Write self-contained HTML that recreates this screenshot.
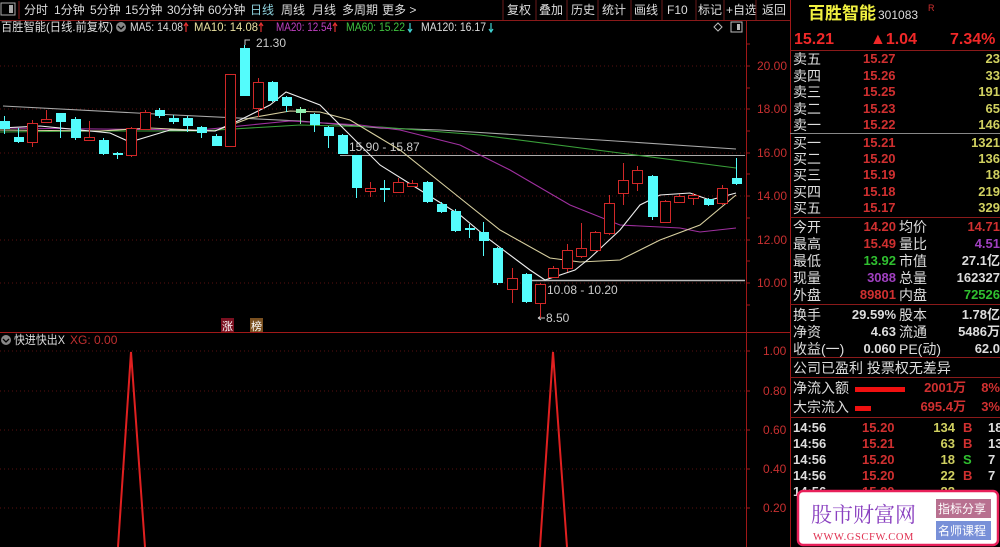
<!DOCTYPE html>
<html><head><meta charset="utf-8"><style>
*{margin:0;padding:0}
body{width:1000px;height:547px;background:#000;overflow:hidden;position:relative;font-family:"Liberation Sans","Noto Sans CJK SC",sans-serif;font-size:12px;color:#ccc}
</style></head><body>
<svg id="s" width="1000" height="547" style="position:absolute;left:0;top:0" xmlns="http://www.w3.org/2000/svg" font-family="Liberation Sans, Noto Sans CJK SC, sans-serif" font-size="12">
<rect x="1" y="3" width="14" height="12" fill="none" stroke="#aaa" stroke-width="1"/><rect x="9" y="5" width="4" height="8" fill="#aaa"/>
<line x1="19" y1="1" x2="19" y2="19" stroke="#8a1a1a"/>
<g fill="#ddd" font-size="12">
<text x="24" y="14">分时</text><text x="54" y="14">1分钟</text><text x="90" y="14">5分钟</text><text x="125" y="14">15分钟</text><text x="167" y="14">30分钟</text><text x="208" y="14">60分钟</text>
<text x="250" y="14" fill="#8fd4e0">日线</text><text x="281" y="14">周线</text><text x="312" y="14">月线</text><text x="342" y="14">多周期</text><text x="382" y="14">更多 &gt;</text>
<text x="507" y="14">复权</text><text x="539" y="14">叠加</text><text x="571" y="14">历史</text><text x="602" y="14">统计</text><text x="634" y="14">画线</text><text x="667" y="14">F10</text><text x="698" y="14">标记</text><text x="726" y="14">+自选</text><text x="762" y="14">返回</text>
</g>
<g stroke="#6a1a1a"><line x1="503" y1="0" x2="503" y2="20"/><line x1="536" y1="0" x2="536" y2="20"/><line x1="567" y1="0" x2="567" y2="20"/><line x1="598" y1="0" x2="598" y2="20"/><line x1="631" y1="0" x2="631" y2="20"/><line x1="662" y1="0" x2="662" y2="20"/><line x1="696" y1="0" x2="696" y2="20"/><line x1="724" y1="0" x2="724" y2="20"/><line x1="756" y1="0" x2="756" y2="20"/></g>
<line x1="0" y1="20.5" x2="790" y2="20.5" stroke="#8a1a1a"/>
<text x="1" y="31" fill="#ddd" textLength="112" lengthAdjust="spacingAndGlyphs">百胜智能(日线.前复权)</text>
<circle cx="121" cy="27" r="5" fill="#888"/><path d="M118 26l3 3 3-3" stroke="#000" fill="none" stroke-width="1.3"/>
<text x="130" y="31" fill="#ddd" textLength="53" lengthAdjust="spacingAndGlyphs">MA5: 14.08</text>
<text x="194" y="31" fill="#e8e0a0" textLength="64" lengthAdjust="spacingAndGlyphs">MA10: 14.08</text>
<text x="276" y="31" fill="#c040c0" textLength="56" lengthAdjust="spacingAndGlyphs">MA20: 12.54</text>
<text x="346" y="31" fill="#40c040" textLength="59" lengthAdjust="spacingAndGlyphs">MA60: 15.22</text>
<text x="421" y="31" fill="#ddd" textLength="65" lengthAdjust="spacingAndGlyphs">MA120: 16.17</text>
<g stroke-width="1.2"><path d="M186 32v-9m-2 3l2-3 2 3" stroke="#e03030" fill="none"/><path d="M261 32v-9m-2 3l2-3 2 3" stroke="#e03030" fill="none"/><path d="M335 32v-9m-2 3l2-3 2 3" stroke="#e03030" fill="none"/><path d="M410 23v9m-2-3l2 3 2-3" stroke="#40d0d0" fill="none"/><path d="M491 23v9m-2-3l2 3 2-3" stroke="#40d0d0" fill="none"/></g>
<path d="M714 27l4-4 4 4-4 4z" stroke="#bbb" fill="none"/><rect x="731" y="22" width="11" height="10" fill="none" stroke="#bbb"/><rect x="737" y="24" width="3" height="6" fill="#bbb"/>
<line x1="746.5" y1="21" x2="746.5" y2="547" stroke="#a01818"/>
<line x1="790.5" y1="0" x2="790.5" y2="547" stroke="#a01818"/>
<line x1="0" y1="332.5" x2="790" y2="332.5" stroke="#a01818"/>
<g stroke="#5a1010" stroke-dasharray="1,3">
<line x1="0" y1="66" x2="746" y2="66"/><line x1="0" y1="109" x2="746" y2="109"/><line x1="0" y1="153" x2="746" y2="153"/><line x1="0" y1="196" x2="746" y2="196"/><line x1="0" y1="240" x2="746" y2="240"/><line x1="0" y1="283" x2="746" y2="283"/>
<line x1="0" y1="351" x2="746" y2="351"/><line x1="0" y1="391" x2="746" y2="391"/><line x1="0" y1="430" x2="746" y2="430"/><line x1="0" y1="469" x2="746" y2="469"/><line x1="0" y1="508" x2="746" y2="508"/>
</g>
<g fill="#c83030" font-size="12">
<text x="757" y="70">20.00</text><text x="757" y="113">18.00</text><text x="757" y="157">16.00</text><text x="757" y="200">14.00</text><text x="757" y="244">12.00</text><text x="757" y="287">10.00</text>
<text x="763" y="355">1.00</text><text x="763" y="395">0.80</text><text x="763" y="434">0.60</text><text x="763" y="473">0.40</text><text x="763" y="512">0.20</text>
</g>
<g stroke="#a01818"><path d="M746 44h4M746 66h4M746 88h4M746 109h4M746 131h4M746 153h4M746 174h4M746 196h4M746 218h4M746 240h4M746 261h4M746 283h4M746 305h4M746 351h4M746 391h4M746 430h4M746 469h4M746 508h4"/></g>
<line x1="340" y1="155.5" x2="745" y2="155.5" stroke="#aaa"/>
<line x1="530" y1="280.5" x2="745" y2="280.5" stroke="#bbb" stroke-width="1.5"/>
<text x="349" y="151" fill="#ccc">15.90 - 15.87</text>
<text x="547" y="294" fill="#ccc">10.08 - 10.20</text>
<text x="546" y="322" fill="#ccc">8.50</text><path d="M538 318h7m-7 0l3-2m-3 2l3 2" stroke="#ccc" fill="none"/>
<text x="256" y="47" fill="#ccc">21.30</text><path d="M245 45v-5h5" stroke="#ccc" fill="none"/>
<g fill="none" stroke-width="1.1">
<polyline stroke="#aaa" points="3,106 175,115 300,121 380,128 440,130 600,140 736,149"/>
<polyline stroke="#3aa03a" points="0,132 100,131 200,131 300,125 380,127 480,135 620,153 736,168"/>
<polyline stroke="#a030a0" points="0,128 100,129 200,130 290,121 360,125 400,130 460,145 510,170 570,205 620,225 680,228 700,232 736,228"/>
<polyline stroke="#d8d0a0" points="0,130 100,131 150,128 215,131 250,118 290,111 320,112 350,120 400,150 450,190 500,230 550,258 580,262 620,260 660,240 700,225 736,195"/>
<polyline stroke="#eee" points="0,128 40,126 110,133 130,142 170,130 215,131 240,120 270,105 286,92 320,105 345,130 380,165 420,190 460,215 490,240 530,270 545,280 575,270 590,258 620,230 640,205 660,195 690,193 710,200 736,193"/>
</g>
<g id="cd"></g>
<circle cx="6" cy="340" r="5" fill="#888"/><path d="M3 339l3 3 3-3" stroke="#000" fill="none" stroke-width="1.3"/>
<text x="14" y="344" fill="#ddd" textLength="51" lengthAdjust="spacingAndGlyphs">快进快出X</text><text x="70" y="344" fill="#c03030">XG: 0.00</text>
<rect x="221" y="318" width="13" height="14" fill="#7a1020"/><text x="222" y="330" fill="#fff" font-size="11">涨</text>
<rect x="250" y="318" width="13" height="14" fill="#7a5020"/><text x="251" y="330" fill="#fff" font-size="11">榜</text>
<polyline points="118,547 131,352 145,547" fill="none" stroke="#e02020" stroke-width="2"/>
<polyline points="540,547 553,352 567,547" fill="none" stroke="#e02020" stroke-width="2"/>
<text x="808" y="19" fill="#f0f040" font-size="17" font-weight="bold">百胜智能</text><text x="878" y="19" fill="#ddd" font-size="12">301083</text><text x="928" y="11" fill="#d03030" font-size="9">R</text>
<g fill="#f02828" font-size="16" font-weight="bold"><text x="794" y="44">15.21</text><text x="870" y="44">▲1.04</text><text x="950" y="44">7.34%</text></g>
<g stroke="#8a1a1a"><line x1="790" y1="50.5" x2="1000" y2="50.5"/><line x1="790" y1="217.5" x2="1000" y2="217.5"/><line x1="790" y1="304.5" x2="1000" y2="304.5"/><line x1="790" y1="357.5" x2="1000" y2="357.5"/><line x1="790" y1="377.5" x2="1000" y2="377.5"/><line x1="790" y1="417.5" x2="1000" y2="417.5"/></g>
<line x1="790" y1="133.5" x2="1000" y2="133.5" stroke="#888"/>
<g font-size="14" fill="#ddd"><text x="793" y="64">卖五</text><text x="793" y="81">卖四</text><text x="793" y="97">卖三</text><text x="793" y="114">卖二</text><text x="793" y="130">卖一</text>
<text x="793" y="148">买一</text><text x="793" y="164">买二</text><text x="793" y="180">买三</text><text x="793" y="197">买四</text><text x="793" y="213">买五</text></g>
<g font-size="13" fill="#d03030" font-weight="bold"><text x="863" y="63">15.27</text><text x="863" y="80">15.26</text><text x="863" y="96">15.25</text><text x="863" y="113">15.23</text><text x="863" y="129">15.22</text>
<text x="863" y="147">15.21</text><text x="863" y="163">15.20</text><text x="863" y="179">15.19</text><text x="863" y="196">15.18</text><text x="863" y="212">15.17</text></g>
<g font-size="13" fill="#d0d060" font-weight="bold" text-anchor="end"><text x="1000" y="63">23</text><text x="1000" y="80">33</text><text x="1000" y="96">191</text><text x="1000" y="113">65</text><text x="1000" y="129">146</text>
<text x="1000" y="147">1321</text><text x="1000" y="163">136</text><text x="1000" y="179">18</text><text x="1000" y="196">219</text><text x="1000" y="212">329</text></g>
<g font-size="14" fill="#ddd"><text x="793" y="232">今开</text><text x="793" y="249">最高</text><text x="793" y="266">最低</text><text x="793" y="283">现量</text><text x="793" y="300">外盘</text>
<text x="899" y="232">均价</text><text x="899" y="249">量比</text><text x="899" y="266">市值</text><text x="899" y="283">总量</text><text x="899" y="300">内盘</text>
<text x="793" y="320">换手</text><text x="793" y="337">净资</text><text x="793" y="354">收益(一)</text><text x="899" y="320">股本</text><text x="899" y="337">流通</text><text x="899" y="354">PE(动)</text>
<text x="793" y="373">公司已盈利 投票权无差异</text><text x="793" y="393">净流入额</text><text x="793" y="412">大宗流入</text></g>
<g font-size="13" font-weight="bold" text-anchor="end"><text x="896" y="231" fill="#d03030">14.20</text><text x="896" y="248" fill="#d03030">15.49</text><text x="896" y="265" fill="#30c030">13.92</text><text x="896" y="282" fill="#a040c0">3088</text><text x="896" y="299" fill="#d03030">89801</text>
<text x="1000" y="231" fill="#d03030">14.71</text><text x="1000" y="248" fill="#a040c0">4.51</text><text x="1000" y="265" fill="#ddd">27.1亿</text><text x="1000" y="282" fill="#ddd">162327</text><text x="1000" y="299" fill="#30c030">72526</text>
<text x="896" y="319" fill="#ddd">29.59%</text><text x="896" y="336" fill="#ddd">4.63</text><text x="896" y="353" fill="#ddd">0.060</text>
<text x="1000" y="319" fill="#ddd">1.78亿</text><text x="1000" y="336" fill="#ddd">5486万</text><text x="1000" y="353" fill="#ddd">62.0</text>
<text x="966" y="392" fill="#d03030">2001万</text><text x="966" y="411" fill="#d03030">695.4万</text><text x="1000" y="392" fill="#d03030">8%</text><text x="1000" y="411" fill="#d03030">3%</text></g>
<rect x="855" y="387" width="50" height="5" fill="#f01010"/><rect x="855" y="406" width="16" height="5" fill="#f01010"/>
<g font-size="13" font-weight="bold"><g fill="#ddd"><text x="793" y="432">14:56</text><text x="793" y="448">14:56</text><text x="793" y="464">14:56</text><text x="793" y="480">14:56</text><text x="793" y="496">14:56</text></g>
<g fill="#d03030"><text x="862" y="432">15.20</text><text x="862" y="448">15.21</text><text x="862" y="464">15.20</text><text x="862" y="480">15.20</text><text x="862" y="496">15.20</text></g>
<g fill="#d0d060" text-anchor="end"><text x="955" y="432">134</text><text x="955" y="448">63</text><text x="955" y="464">18</text><text x="955" y="480">22</text><text x="955" y="496">22</text></g>
<text x="963" y="432" fill="#d03030">B</text><text x="963" y="448" fill="#d03030">B</text><text x="963" y="464" fill="#30c030">S</text><text x="963" y="480" fill="#d03030">B</text>
<g fill="#ddd"><text x="988" y="432">18</text><text x="988" y="448">13</text><text x="988" y="464">7</text><text x="988" y="480">7</text></g></g>
<rect x="798" y="491" width="200" height="54" rx="5" fill="#fff" stroke="#e8205a" stroke-width="2.5"/>
<text x="811" y="522" fill="#8a40c0" font-size="21" font-family="Liberation Serif, Noto Serif CJK SC, serif">股市财富网</text>
<text x="813" y="540" fill="#e03050" font-size="10.5" font-family="Liberation Serif, serif" letter-spacing="0.6">WWW.GSCFW.COM</text>
<rect x="936" y="499" width="55" height="19" fill="#b87090"/><text x="938" y="513" fill="#fff" font-size="12">指标分享</text>
<rect x="936" y="521" width="55" height="19" fill="#7890d8"/><text x="938" y="535" fill="#fff" font-size="12">名师课程</text>
</svg>
<script>
var d=[[4,121,129,116,134,'c'],[18,137,142,128,143,'c'],[32,123,142,120,147,'r'],[46,119,122,110,122,'r'],[60,113,122,113,138,'c'],[75,119,138,117,140,'c'],[89,137,140,121,140,'r'],[103,140,154,138,155,'c'],[117,153,155,152,159,'c'],[131,128,155,127,157,'r'],[145,112,129,110,130,'r'],[159,110,116,108,118,'c'],[173,118,122,115,124,'c'],[187,118,126,116,132,'c'],[201,127,133,126,138,'c'],[216,136,146,134,146,'c'],[230,74,146,74,146,'r'],[244,48,96,45,96,'c'],[258,82,108,78,117,'r'],[272,82,101,81,102,'c'],[286,97,106,96,112,'c'],[300,109,113,107,124,'g'],[314,114,125,113,132,'c'],[328,127,136,126,148,'c'],[342,135,154,134,154,'c'],[356,155,188,155,198,'c'],[370,188,191,182,197,'r'],[384,188,190,180,202,'c'],[398,182,192,178,193,'r'],[412,183,186,180,187,'r'],[427,182,202,181,203,'c'],[441,204,212,202,213,'c'],[455,211,231,209,232,'c'],[469,228,230,224,238,'c'],[483,232,241,222,256,'c'],[497,248,283,247,285,'c'],[512,278,289,268,303,'r'],[526,274,302,273,303,'c'],[540,284,303,283,318,'r'],[553,268,277,266,278,'r'],[567,250,268,244,272,'r'],[581,248,256,223,258,'r'],[595,232,250,231,251,'r'],[609,203,233,195,235,'r'],[623,180,193,163,205,'r'],[637,170,183,166,191,'r'],[652,176,217,175,220,'c'],[665,201,222,200,223,'r'],[679,196,202,194,203,'r'],[693,195,198,193,205,'r'],[708,199,205,198,206,'c'],[722,188,203,185,205,'r'],[736,178,184,158,185,'c']];
var h='';d.forEach(function(c){var x=c[0],col=c[5]=='r'?'#d02828':(c[5]=='g'?'#90f0b0':'#54fcfc');
h+='<line x1="'+(x+.5)+'" y1="'+c[3]+'" x2="'+(x+.5)+'" y2="'+c[4]+'" stroke="'+col+'"/>';
var hgt=Math.max(1,c[2]-c[1]);
if(c[5]=='r')h+='<rect x="'+(x-4.5)+'" y="'+(c[1]+.5)+'" width="10" height="'+hgt+'" fill="#000" stroke="'+col+'"/>';
else h+='<rect x="'+(x-4)+'" y="'+c[1]+'" width="10" height="'+hgt+'" fill="'+col+'"/>';});
document.getElementById('cd').innerHTML=h;
</script>
</body></html>
